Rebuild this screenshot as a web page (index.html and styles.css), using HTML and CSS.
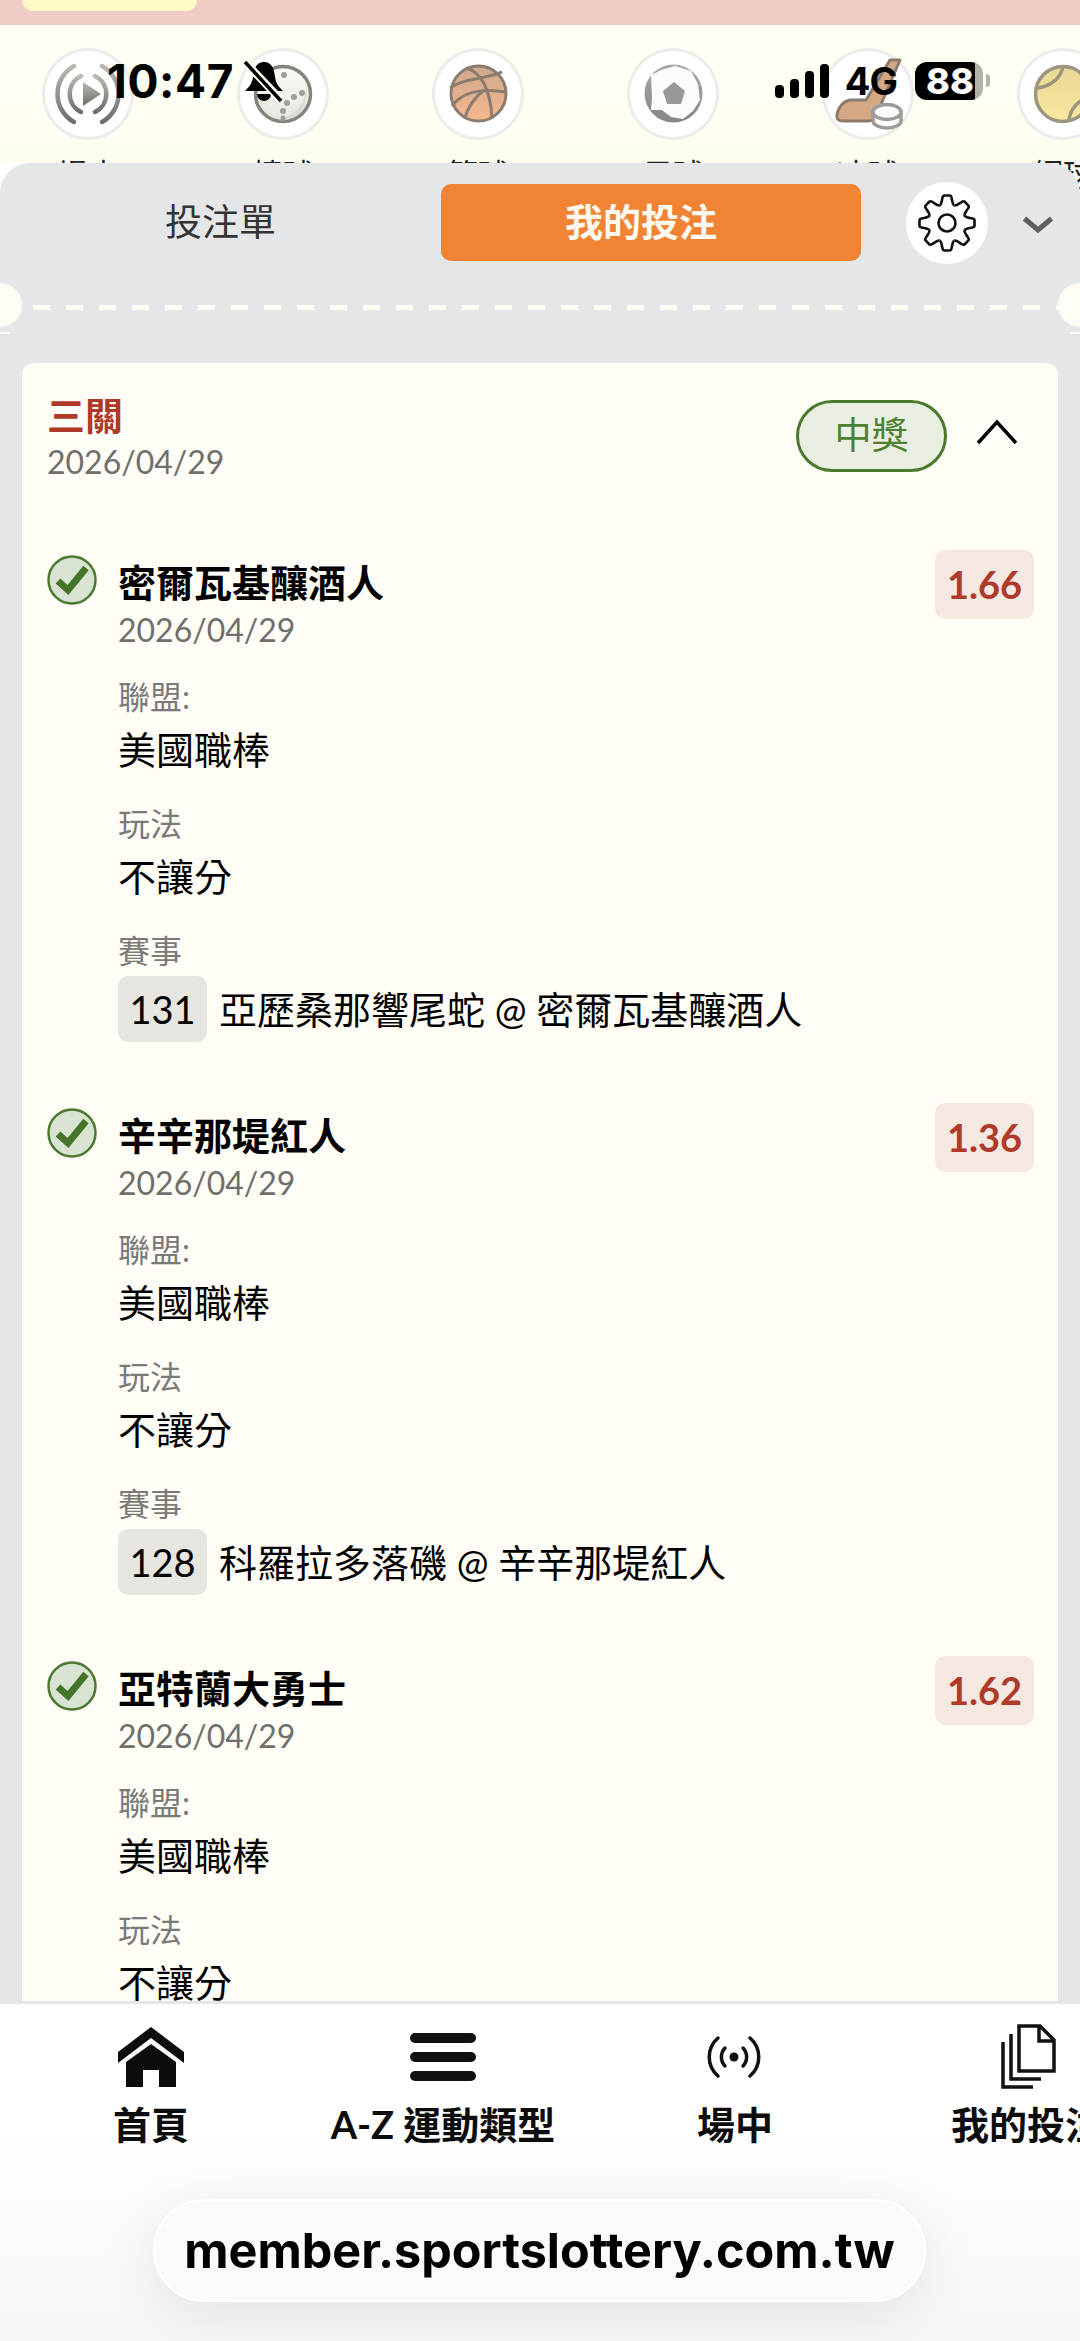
FILE: index.html
```html
<!DOCTYPE html>
<html lang="zh-Hant">
<head>
<meta charset="utf-8">
<title>我的投注</title>
<link rel="stylesheet" href="styles.css">
</head>
<body>
<div class="page">
  <div class="banner"><div class="banner-chip"></div></div>

  <div class="sports">
    <div class="sport">
      <div class="sport-circle">
        <svg class="ball" viewBox="0 0 92 92"><defs><linearGradient id="g1" x1="0" y1="0" x2="0" y2="1"><stop offset="0" stop-color="#b9b8b3"/><stop offset="1" stop-color="#6f6e6a"/></linearGradient></defs><g fill="none" stroke="url(#g1)" stroke-width="4.5" stroke-linecap="round"><path d="M32 18A32 32 0 0 0 32 74"/><path d="M60 18A32 32 0 0 1 60 74"/><path d="M39 28A20 20 0 0 0 39 64"/><path d="M53 28A20 20 0 0 1 53 64"/></g><path d="M41 34 59 46 41 58Z" fill="url(#g1)"/></svg>
      </div>
      <span class="sport-label">場中</span>
    </div>
    <div class="sport">
      <div class="sport-circle">
        <svg class="ball" viewBox="0 0 92 92"><defs><linearGradient id="g2" x1="0" y1="0" x2="0" y2="1"><stop offset="0" stop-color="#fbfaf5"/><stop offset="1" stop-color="#e6e5e1"/></linearGradient></defs><circle cx="46" cy="46" r="27.5" fill="url(#g2)" stroke="#85847e" stroke-width="3.5"/><path d="M69 32C72 50 62 66 42 72 60 74 74 58 69 32Z" fill="#d9d8d3"/><g fill="#a09f9a"><circle cx="47" cy="27" r="3"/><circle cx="65" cy="45" r="3"/><circle cx="57" cy="49" r="3"/><circle cx="50" cy="55" r="3"/><circle cx="46" cy="63" r="3"/><circle cx="46" cy="70" r="2.5"/></g></svg>
      </div>
      <span class="sport-label">棒球</span>
    </div>
    <div class="sport">
      <div class="sport-circle">
        <svg class="ball" viewBox="0 0 92 92"><defs><linearGradient id="g3" x1="0" y1="0" x2="0" y2="1"><stop offset="0" stop-color="#cfa98e"/><stop offset="1" stop-color="#f6b78d"/></linearGradient></defs><circle cx="46.5" cy="45.5" r="27.5" fill="url(#g3)" stroke="#8c7d70" stroke-width="3"/><g fill="none" stroke="#8c7d70" stroke-width="3"><path d="M34 20C48 24 58 38 60 70"/><path d="M18 40C32 30 50 32 70 24"/><path d="M20 58C30 44 50 40 74 44"/><path d="M33 70C36 58 42 50 52 42"/></g></svg>
      </div>
      <span class="sport-label">籃球</span>
    </div>
    <div class="sport">
      <div class="sport-circle">
        <svg class="ball" viewBox="0 0 92 92"><defs><linearGradient id="g4" x1="0" y1="0" x2="0" y2="1"><stop offset="0" stop-color="#a8a8a6"/><stop offset="1" stop-color="#868684"/></linearGradient></defs><circle cx="46.5" cy="45.5" r="29" fill="url(#g4)"/><path d="M24 27 34 22 48 18 64 23 71 36 73 52 66 63 56 71 44 69 35 62 24 62 25 50Z" fill="#fbfbfa"/><path d="M47 34 58 43 54 56 40 56 36 43Z" fill="#989896"/></svg>
      </div>
      <span class="sport-label">足球</span>
    </div>
    <div class="sport">
      <div class="sport-circle">
        <svg class="ball" viewBox="0 0 92 92"><path d="M68 12H78L54 68Q52 73 46 73H20Q14 73 15 66 18 54 28 52H44Z" fill="#d4a884" stroke="#8c7b6c" stroke-width="3" stroke-linejoin="round"/><g fill="#fff" stroke="#9c9c9a" stroke-width="3.5"><path d="M51 64V73C51 77 58 80 65 80S79 77 79 73V64Z"/><ellipse cx="65" cy="64" rx="14" ry="7.5"/></g></svg>
      </div>
      <span class="sport-label">冰球</span>
    </div>
    <div class="sport">
      <div class="sport-circle">
        <svg class="ball" viewBox="0 0 92 92"><defs><linearGradient id="g6" x1="0" y1="0" x2="0" y2="1"><stop offset="0" stop-color="#e8d994"/><stop offset="1" stop-color="#fbe8a0"/></linearGradient></defs><circle cx="46" cy="46" r="27.5" fill="url(#g6)" stroke="#9c967f" stroke-width="3.5"/><g fill="none" stroke="#9c967f" stroke-width="3.5"><path d="M18 40C30 40 44 32 46 18"/><path d="M52 74C52 62 62 50 74 50"/></g></svg>
      </div>
      <span class="sport-label">網球</span>
    </div>
  </div>

  <div class="status">
    <div class="status-left">
      <span class="clock">10:47</span>
      <svg class="bell" viewBox="0 0 40 42"><path d="M20 2C12 2 10 9 9 17 8 24 5 27 1 31H39C35 27 32 24 31 17 30 9 28 2 20 2Z" fill="#000"/><path d="M13 34A7 7 0 0 0 27 34Z" fill="#000"/><path d="M2 3 36 39" stroke="#fffef3" stroke-width="8"/><path d="M1 2 37 41" stroke="#000" stroke-width="3.5"/></svg>
    </div>
    <div class="status-right">
      <div class="signal"><i class="bar b1"></i><i class="bar b2"></i><i class="bar b3"></i><i class="bar b4"></i></div>
      <span class="net">4G</span>
      <div class="battery"><span>88</span></div>
    </div>
  </div>

  <section class="sheet">
    <div class="tabs">
      <div class="tab">投注單</div>
      <div class="tab tab-active">我的投注</div>
      <div class="gear">
        <svg viewBox="-30 -30 60 60" width="60" height="60"><defs><path id="tooth" d="M-7.3-17.6C-5.5-18.5-5.5-21-4.5-25.5-4.2-27-3.5-27.5-2.5-27.5H2.5C3.5-27.5 4.2-27 4.5-25.5 5.5-21 5.5-18.5 7.3-17.6"/></defs><g fill="none" stroke="#111" stroke-width="2.6"><use href="#tooth"/><use href="#tooth" transform="rotate(45)"/><use href="#tooth" transform="rotate(90)"/><use href="#tooth" transform="rotate(135)"/><use href="#tooth" transform="rotate(180)"/><use href="#tooth" transform="rotate(225)"/><use href="#tooth" transform="rotate(270)"/><use href="#tooth" transform="rotate(315)"/><circle r="8.5"/></g></svg>
      </div>
      <svg class="collapse" viewBox="0 0 32 18"><path d="M2.5 2.5 16 14 29.5 2.5" fill="none" stroke="#5f5f5f" stroke-width="5"/></svg>
    </div>

    <div class="ticket-edge">
      <span class="notch notch-left"></span>
      <span class="notch notch-right"></span>
    </div>

    <div class="card">
      <header class="card-head">
        <div class="card-title">
          <div class="parlay">三關</div>
          <div class="date">2026/04/29</div>
        </div>
        <div class="won">中獎</div>
        <svg class="fold" viewBox="0 0 42 26"><path d="M2 24 21 3 40 24" fill="none" stroke="#000" stroke-width="3.5"/></svg>
      </header>

      <article class="bet">
        <svg class="check" viewBox="0 0 50 50"><circle cx="25" cy="25" r="23.5" fill="#d9e3d2" stroke="#4b7a2f" stroke-width="2.5"/><path d="M11 26 21 35 39 13" fill="none" stroke="#44752a" stroke-width="7"/></svg>
        <div class="bet-main">
          <div class="team">密爾瓦基釀酒人</div>
          <div class="date">2026/04/29</div>
          <div class="field"><div class="field-label">聯盟:</div><div class="field-value">美國職棒</div></div>
          <div class="field"><div class="field-label">玩法</div><div class="field-value">不讓分</div></div>
          <div class="field">
            <div class="field-label">賽事</div>
            <div class="match"><span class="match-no">131</span><span class="field-value">亞歷桑那響尾蛇 @ 密爾瓦基釀酒人</span></div>
          </div>
        </div>
        <div class="odds">1.66</div>
      </article>

      <article class="bet">
        <svg class="check" viewBox="0 0 50 50"><circle cx="25" cy="25" r="23.5" fill="#d9e3d2" stroke="#4b7a2f" stroke-width="2.5"/><path d="M11 26 21 35 39 13" fill="none" stroke="#44752a" stroke-width="7"/></svg>
        <div class="bet-main">
          <div class="team">辛辛那堤紅人</div>
          <div class="date">2026/04/29</div>
          <div class="field"><div class="field-label">聯盟:</div><div class="field-value">美國職棒</div></div>
          <div class="field"><div class="field-label">玩法</div><div class="field-value">不讓分</div></div>
          <div class="field">
            <div class="field-label">賽事</div>
            <div class="match"><span class="match-no">128</span><span class="field-value">科羅拉多落磯 @ 辛辛那堤紅人</span></div>
          </div>
        </div>
        <div class="odds">1.36</div>
      </article>

      <article class="bet">
        <svg class="check" viewBox="0 0 50 50"><circle cx="25" cy="25" r="23.5" fill="#d9e3d2" stroke="#4b7a2f" stroke-width="2.5"/><path d="M11 26 21 35 39 13" fill="none" stroke="#44752a" stroke-width="7"/></svg>
        <div class="bet-main">
          <div class="team">亞特蘭大勇士</div>
          <div class="date">2026/04/29</div>
          <div class="field"><div class="field-label">聯盟:</div><div class="field-value">美國職棒</div></div>
          <div class="field"><div class="field-label">玩法</div><div class="field-value">不讓分</div></div>
        </div>
        <div class="odds">1.62</div>
      </article>
    </div>
  </section>

  <nav class="nav">
    <a class="nav-item">
      <svg class="nav-icon" viewBox="0 0 70 66"><path d="M35 3 2 28V39L35 14 68 39V28Z" fill="#0d0d0d"/><path d="M35 20 60 38V63H43V46H27V63H10V38Z" fill="#0d0d0d"/></svg>
      <span>首頁</span>
    </a>
    <a class="nav-item">
      <div class="nav-icon menu-icon"><i></i><i></i><i></i></div>
      <span>A-Z 運動類型</span>
    </a>
    <a class="nav-item">
      <svg class="nav-icon" viewBox="0 0 70 66"><circle cx="34" cy="33" r="4.5" fill="#111"/><g fill="none" stroke="#111" stroke-width="3.5" stroke-linecap="round"><path d="M25 24A13 13 0 0 0 25 42"/><path d="M43 24A13 13 0 0 1 43 42"/><path d="M18 14A25 25 0 0 0 18 52"/><path d="M50 14A25 25 0 0 1 50 52"/></g></svg>
      <span>場中</span>
    </a>
    <a class="nav-item">
      <svg class="nav-icon" viewBox="0 0 70 66"><g fill="none" stroke="#111" stroke-width="3.5"><path d="M27 2H48L62 16V47H27Z"/><path d="M47 2V17H62"/><path d="M19 10V55H49"/><path d="M11 18V63H41"/></g></svg>
      <span>我的投注</span>
    </a>
  </nav>

  <div class="url-pill">member.sportslottery.com.tw</div>
</div>
</body>
</html>
```
FILE: styles.css
```css
* { box-sizing: border-box; }
html, body { margin: 0; padding: 0; }
body {
  width: 1080px;
  height: 2341px;
  overflow: hidden;
  background: #fff;
  font-family: "Lato", "Noto Sans CJK TC", sans-serif;
  color: #000;
}
.page {
  position: relative;
  width: 1080px;
  height: 2341px;
  overflow: hidden;
  display: flex;
  flex-direction: column;
}

/* top strip */
.banner {
  flex: 0 0 25px;
  background: #f0ccc7;
  padding-left: 22px;
}
.banner-chip {
  width: 175px;
  height: 11px;
  background: #fff9c6;
  border-radius: 0 0 12px 12px;
}

/* sport icons */
.sports {
  flex: 0 0 138px;
  min-height: 0;
  display: flex;
  gap: 103px;
  padding: 23px 0 0 42px;
  background: linear-gradient(#fffff4, #fdfdf0);
}
.sport {
  flex: 0 0 92px;
  display: flex;
  flex-direction: column;
  align-items: center;
  gap: 14px;
}
.sport-circle {
  flex: none;
  width: 92px;
  height: 92px;
  border-radius: 50%;
  background: #fff;
  box-shadow: inset 0 0 0 3px #eeecea;
}
.ball { display: block; width: 92px; height: 92px; }
.sport-label {
  font-size: 31px;
  line-height: 40px;
  color: #222;
  white-space: nowrap;
}

/* status bar */
.status {
  position: absolute;
  top: 60px;
  left: 0;
  width: 1080px;
  height: 42px;
  display: flex;
  justify-content: space-between;
  padding: 0 97px 0 107px;
}
.status-left, .status-right { display: flex; align-items: center; }
.clock {
  font: 700 46px/42px "Inter", sans-serif;
  letter-spacing: 0.6px;
}
.bell { width: 40px; height: 42px; margin-left: 10px; }
.signal { display: flex; align-items: flex-end; gap: 6px; height: 34px; }
.bar { display: block; width: 9px; background: #000; border-radius: 4px; }
.b1 { height: 13px; }
.b2 { height: 19px; }
.b3 { height: 27px; }
.b4 { height: 34px; }
.net {
  font: 700 38px/42px "Inter", sans-serif;
  margin-left: 16px;
  letter-spacing: -1px;
}
.battery {
  position: relative;
  width: 68px;
  height: 38px;
  margin-left: 18px;
  border-radius: 12px;
  background: linear-gradient(90deg, #000 60px, #b2b2aa 60px);
  padding-left: 11px;
  font: 800 36px/38px "Inter", sans-serif;
  color: #fff;
}
.battery::after {
  content: "";
  position: absolute;
  right: -7px;
  top: 12px;
  width: 4px;
  height: 13px;
  border-radius: 0 4px 4px 0;
  background: #b2b2aa;
}

/* bottom sheet */
.sheet {
  position: relative;
  flex: 0 0 1841px;
  min-height: 0;
  display: flex;
  flex-direction: column;
  background: #e5e6e8;
  border-radius: 30px 30px 0 0;
  padding-bottom: 3px;
  overflow: hidden;
}
.tabs {
  flex: 0 0 119px;
  display: flex;
  align-items: flex-start;
  padding: 21px 0 0 0;
}
.tab {
  flex: 0 0 420px;
  height: 77px;
  font-size: 37px;
  line-height: 75px;
  text-align: center;
  color: #333;
  border-radius: 10px;
}
.tab-active {
  padding-right: 20px;
  font-size: 38px;
  color: #fffaf0;
  font-weight: 700;
  background: #f08334;
}
.tabs .tab:first-child { flex-basis: 441px; }
.gear {
  flex: 0 0 82px;
  height: 82px;
  margin: -2px 0 0 45px;
  border-radius: 50%;
  background: #fff;
  display: flex;
  align-items: center;
  justify-content: center;
}
.collapse { width: 32px; height: 18px; margin: 32px 0 0 34px; }

.ticket-edge {
  position: relative;
  flex: 0 0 81px;
  background: repeating-linear-gradient(90deg, #fffdf5 0, #fffdf5 17px, transparent 17px, transparent 33px) 0 23px / 100% 5px no-repeat;
}
.notch {
  position: absolute;
  top: 1px;
  width: 44px;
  height: 44px;
  border-radius: 50%;
  background: #fffdf5;
}
.notch::after {
  content: "";
  position: absolute;
  top: 49px;
  width: 10px;
  height: 2px;
  background: #fffdf5;
}
.notch-left { left: -22px; }
.notch-left::after { left: 22px; }
.notch-right { right: -22px; }
.notch-right::after { left: 12px; }

.card {
  flex: 1;
  min-height: 0;
  margin: 0 22px;
  padding: 27px 24px 0 25px;
  background: #fffdf5;
  border-radius: 12px 12px 0 0;
  overflow: hidden;
}
.card-head {
  display: flex;
  align-items: flex-start;
  padding-bottom: 66px;
}
.card-title { flex: 1; }
.parlay {
  font-size: 38px;
  line-height: 50px;
  font-weight: 700;
  color: #b03a2a;
}
.date {
  font-size: 32px;
  line-height: 44px;
  color: #6f6f6c;
}
.won {
  width: 151px;
  height: 72px;
  margin-top: 10px;
  border: 3px solid #4b7a2f;
  border-radius: 36px;
  background: #e9efe0;
  color: #4f7f30;
  font-size: 37px;
  line-height: 64px;
  text-align: center;
}
.fold { flex: none; width: 42px; height: 26px; margin: 29px 16px 0 29px; }

.bet {
  height: 553px;
  display: flex;
  align-items: flex-start;
}
.check { flex: 0 0 50px; height: 50px; margin: 5px 21px 0 0; }
.bet-main { flex: 1; padding-top: 7px; }
.team {
  font-size: 38px;
  line-height: 50px;
  font-weight: 700;
}
.bet-main .date { margin-top: 1px; }
.field { margin-top: 23px; }
.field + .field { margin-top: 26px; }
.field-label {
  font-size: 32px;
  line-height: 44px;
  color: #7a7a78;
}
.field-value {
  display: block;
  font-size: 38px;
  line-height: 54px;
  margin-top: 3px;
}
.match {
  display: flex;
  align-items: center;
  gap: 12px;
  margin: 3px 0 0 0;
}
.match .field-value { margin-top: 0; white-space: nowrap; }
.match-no {
  flex: 0 0 89px;
  height: 66px;
  border-radius: 10px;
  background: #e6e5e0;
  font-size: 38px;
  line-height: 66px;
  text-align: center;
}
.odds {
  flex: 0 0 99px;
  height: 69px;
  border-radius: 10px;
  background: #f5e8e1;
  color: #b03a2a;
  font-size: 38px;
  font-weight: 700;
  line-height: 69px;
  text-align: center;
}

/* bottom nav */
.nav {
  flex: 1;
  min-height: 0;
  display: flex;
  padding: 20px 0 0 5px;
  background: linear-gradient(#fff 130px, #f6f6f6);
}
.nav-item {
  flex: 0 0 292px;
  display: flex;
  flex-direction: column;
  align-items: center;
  white-space: nowrap;
  font-size: 38px;
  font-weight: 700;
  line-height: 54px;
  color: #0d0d0d;
}
.nav-icon { display: block; width: 70px; height: 66px; margin-bottom: 7px; }
.menu-icon {
  display: flex;
  flex-direction: column;
  justify-content: center;
  gap: 9px;
  padding: 0 2px;
}
.menu-icon i {
  display: block;
  height: 10px;
  border-radius: 5px;
  background: #111;
}

/* browser address pill */
.url-pill {
  position: absolute;
  left: 153px;
  top: 2199px;
  width: 773px;
  height: 103px;
  border-radius: 52px;
  border: 2px solid #fff;
  background: #fafafa;
  box-shadow: 0 10px 60px rgba(0, 0, 0, 0.09);
  font: 700 48.5px/99px "Inter", sans-serif;
  text-align: center;
  color: #000;
  white-space: nowrap;
}
```
